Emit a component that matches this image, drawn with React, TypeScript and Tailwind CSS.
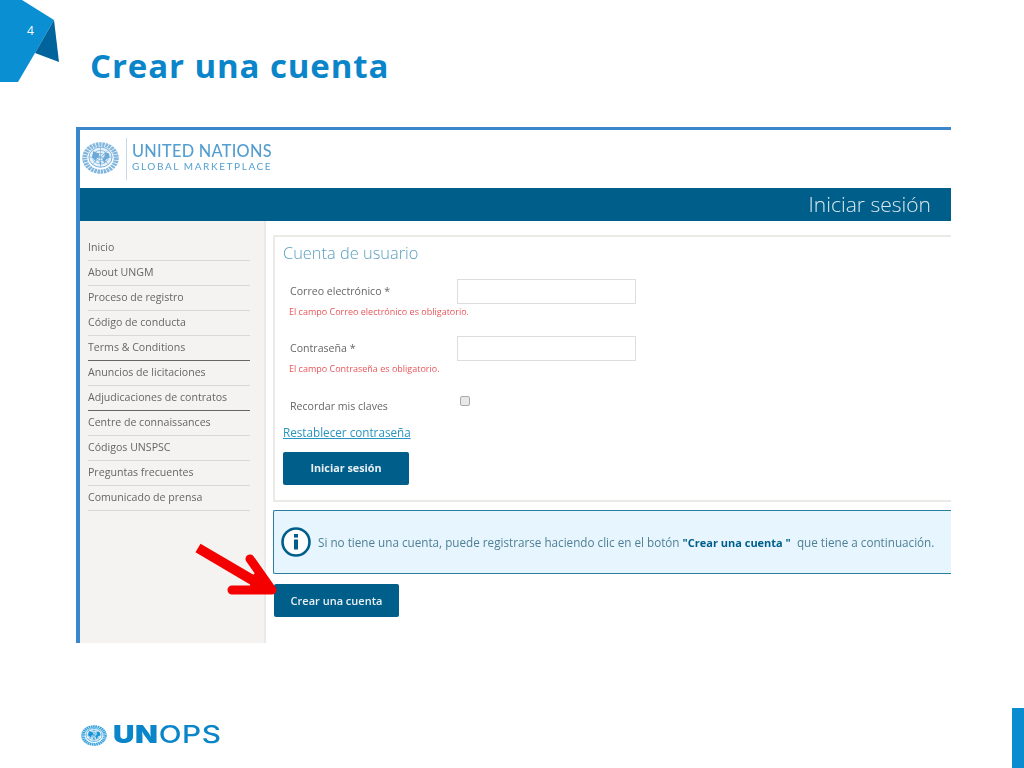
import React from "react";

const menuItems = [
  { label: "Inicio" },
  { label: "About UNGM" },
  { label: "Proceso de registro" },
  { label: "Código de conducta" },
  { label: "Terms & Conditions", dark: true },
  { label: "Anuncios de licitaciones" },
  { label: "Adjudicaciones de contratos", dark: true },
  { label: "Centre de connaissances" },
  { label: "Códigos UNSPSC" },
  { label: "Preguntas frecuentes" },
  { label: "Comunicado de prensa" },
];

const UnEmblem = ({ width, height, color, className }: { width: number; height: number; color: string; className?: string }) => (
  <svg width={width} height={height} viewBox="0 0 40 40" preserveAspectRatio="none" className={className}>
    <circle cx="20" cy="20" r="17" fill="none" stroke={color} strokeWidth="5.5" strokeDasharray="2.6 0.8" opacity="0.85" />
    <circle cx="20" cy="19" r="13" fill="#eaf3fa" />
    <circle cx="20" cy="19" r="12.5" fill="none" stroke={color} strokeWidth="1" />
    <circle cx="20" cy="19" r="8.5" fill="none" stroke={color} strokeWidth="0.8" />
    <circle cx="20" cy="19" r="4.5" fill="none" stroke={color} strokeWidth="0.8" />
    <path d="M20 6.5V31.5M7.5 19H32.5M11 10l18 18M29 10L11 28" stroke={color} strokeWidth="0.7" />
    <path d="M12 12l6 2 1 5-3 1-1 4-4-5zM24 13l5 1 1 5-4 3-2 5-2-6 3-3zM18 24l3 1-1 3z" fill={color} />
  </svg>
);

const FieldRow = ({ label, error }: { label: string; error: string }) => (
  <div className="h-[57px]">
    <div className="flex h-[25px] items-center pl-[7px]">
      <span className="w-[167px] text-[10.6px] text-[#666666]">{label}</span>
      <div className="h-[25px] w-[179px] border border-[#dddddd] bg-white" />
    </div>
    <p className="mt-px pl-[6px] text-[9px] leading-[14px] text-[#e8555a]">{error}</p>
  </div>
);

export default function App() {
  return (
    <div className="relative flex h-[768px] w-[1024px] flex-col overflow-hidden bg-white font-['Open_Sans',sans-serif]">
      {/* slide corner */}
      <svg width="60" height="84" viewBox="0 0 60 84" className="absolute left-0 top-0">
        <path d="M0 0H22L54 20L35 53L18 82H0Z" fill="#0a8fd2" />
        <path d="M54 20L59 62L35 53Z" fill="#00639c" />
      </svg>
      <span className="absolute left-[27px] top-[22px] text-[12px] text-white">4</span>

      <h1 className="ml-[90px] mt-[43px] h-[84px] text-[33px] font-bold leading-[45px] tracking-[0.9px] text-[#0a85c9]">
        Crear una cuenta
      </h1>

      {/* captured web page */}
      <div className="ml-[76px] h-[516px] w-[875px] overflow-hidden border-l-4 border-t-[3px] border-[#3b87cc] blur-[0.3px]">
        <div className="flex h-[58px] items-center pl-[2px]">
          <UnEmblem width={37} height={32} color="#6ba9d8" className="mb-[3px] shrink-0" />
          <div className="ml-[7px] mr-[5px] mb-px h-[42px] w-px bg-[#c5d9e8]" />
          <div className="mb-[3px] font-['Lato',sans-serif] text-[#549fd0]">
            <div className="text-[16.3px] font-medium leading-[18px] tracking-[0.3px]">UNITED NATIONS</div>
            <div className="text-[10px] leading-[13px] tracking-[1.6px]">GLOBAL MARKETPLACE</div>
          </div>
        </div>

        <div className="flex h-[33px] items-center justify-end bg-[#005f8a] pr-[20px] text-[21px] font-light text-[#dce8ee]">
          Iniciar sesión
        </div>

        <div className="flex h-[422px]">
          <nav className="w-[186px] shrink-0 border-r-2 border-[#e9e9e9] bg-[#f4f3f1] pl-[8px] pr-[14px] pt-[15px]">
            {menuItems.map((item) => (
              <div
                key={item.label}
                className={
                  item.dark
                    ? "flex h-[25px] items-center border-b border-[#666666] text-[10.6px] text-[#666666]"
                    : "flex h-[25px] items-center border-b border-[#d8d8d8] text-[10.6px] text-[#666666]"
                }
              >
                {item.label}
              </div>
            ))}
          </nav>

          <main className="min-w-0 flex-1 pl-[7px] pt-[14px]">
            <section className="h-[267px] border-y-2 border-l-2 border-[#eceae7] pl-[8px] pt-[4px]">
              <h2 className="h-[38px] text-[16.4px] font-light leading-[24px] text-[#5a9fc0]">Cuenta de usuario</h2>
              <FieldRow label="Correo electrónico *" error="El campo Correo electrónico es obligatorio." />
              <FieldRow label="Contraseña *" error="El campo Contraseña es obligatorio." />
              <div className="flex h-[31px] items-start pl-[7px]">
                <span className="w-[170px] pt-[5px] text-[10.6px] leading-[16px] text-[#666666]">Recordar mis claves</span>
                <div className="mt-[3px] h-[10px] w-[10px] rounded-[2px] border border-[#aaaaaa] bg-[#e8e8e8]" />
              </div>
              <a className="block text-[11.7px] leading-[16px] text-[#2a94c0] underline">Restablecer contraseña</a>
              <button className="mt-[12px] h-[33px] w-[126px] rounded-[2px] bg-[#005f8a] text-[10.8px] font-bold text-[#e8f0f4]">
                Iniciar sesión
              </button>
            </section>

            <div className="mt-[8px] flex h-[64px] items-center gap-[7px] rounded-l-[2px] border-y border-l border-[#2a7fa0] bg-[#e6f5fe] pl-[7px]">
              <svg width="30" height="30" viewBox="0 0 30 30" className="shrink-0">
                <circle cx="15" cy="15" r="13.5" fill="#ffffff" stroke="#005f8a" strokeWidth="2.6" />
                <rect x="13" y="12.5" width="4" height="10" fill="#005f8a" />
                <rect x="13" y="7" width="4" height="3.6" fill="#005f8a" />
              </svg>
              <p className="whitespace-pre pt-[2px] text-[11.7px] text-[#4f7f95]">
                Si no tiene una cuenta, puede registrarse haciendo clic en el botón{" "}
                <strong className="text-[11px] font-bold text-[#005f8a]">"Crear una cuenta "</strong>
                {"  "}que tiene a continuación.
              </p>
            </div>

            <button className="ml-px mt-[10px] h-[33px] w-[125px] rounded-[2px] bg-[#005f8a] pt-[2px] text-[11px] font-semibold text-[#e8f0f4]">
              Crear una cuenta
            </button>
          </main>
        </div>
      </div>

      {/* red annotation arrow */}
      <svg width="90" height="60" viewBox="0 0 90 60" className="absolute left-[190px] top-[542px]">
        <path d="M8 6L76 46" stroke="#f40000" strokeWidth="10" fill="none" />
        <path d="M60 17L82 48H42" stroke="#f40000" strokeWidth="9" strokeLinecap="round" strokeLinejoin="round" fill="none" />
        <path d="M62 34L68 28L82 48L60 44Z" fill="#f40000" />
      </svg>

      <footer className="mt-auto flex items-end justify-between">
        <div className="mb-[20px] ml-[81px] flex items-center gap-[6px]">
          <UnEmblem width={26} height={21} color="#1a94d6" className="shrink-0" />
          <span className="origin-left scale-x-[1.24] font-['Inter',sans-serif] text-[24px] leading-[26px] tracking-[0.5px] text-[#0a85c9]">
            <span className="font-black">UN</span>
            <span className="font-medium">OPS</span>
          </span>
        </div>
        <div className="h-[60px] w-[12px] bg-[#0a8cd0]" />
      </footer>
    </div>
  );
}
